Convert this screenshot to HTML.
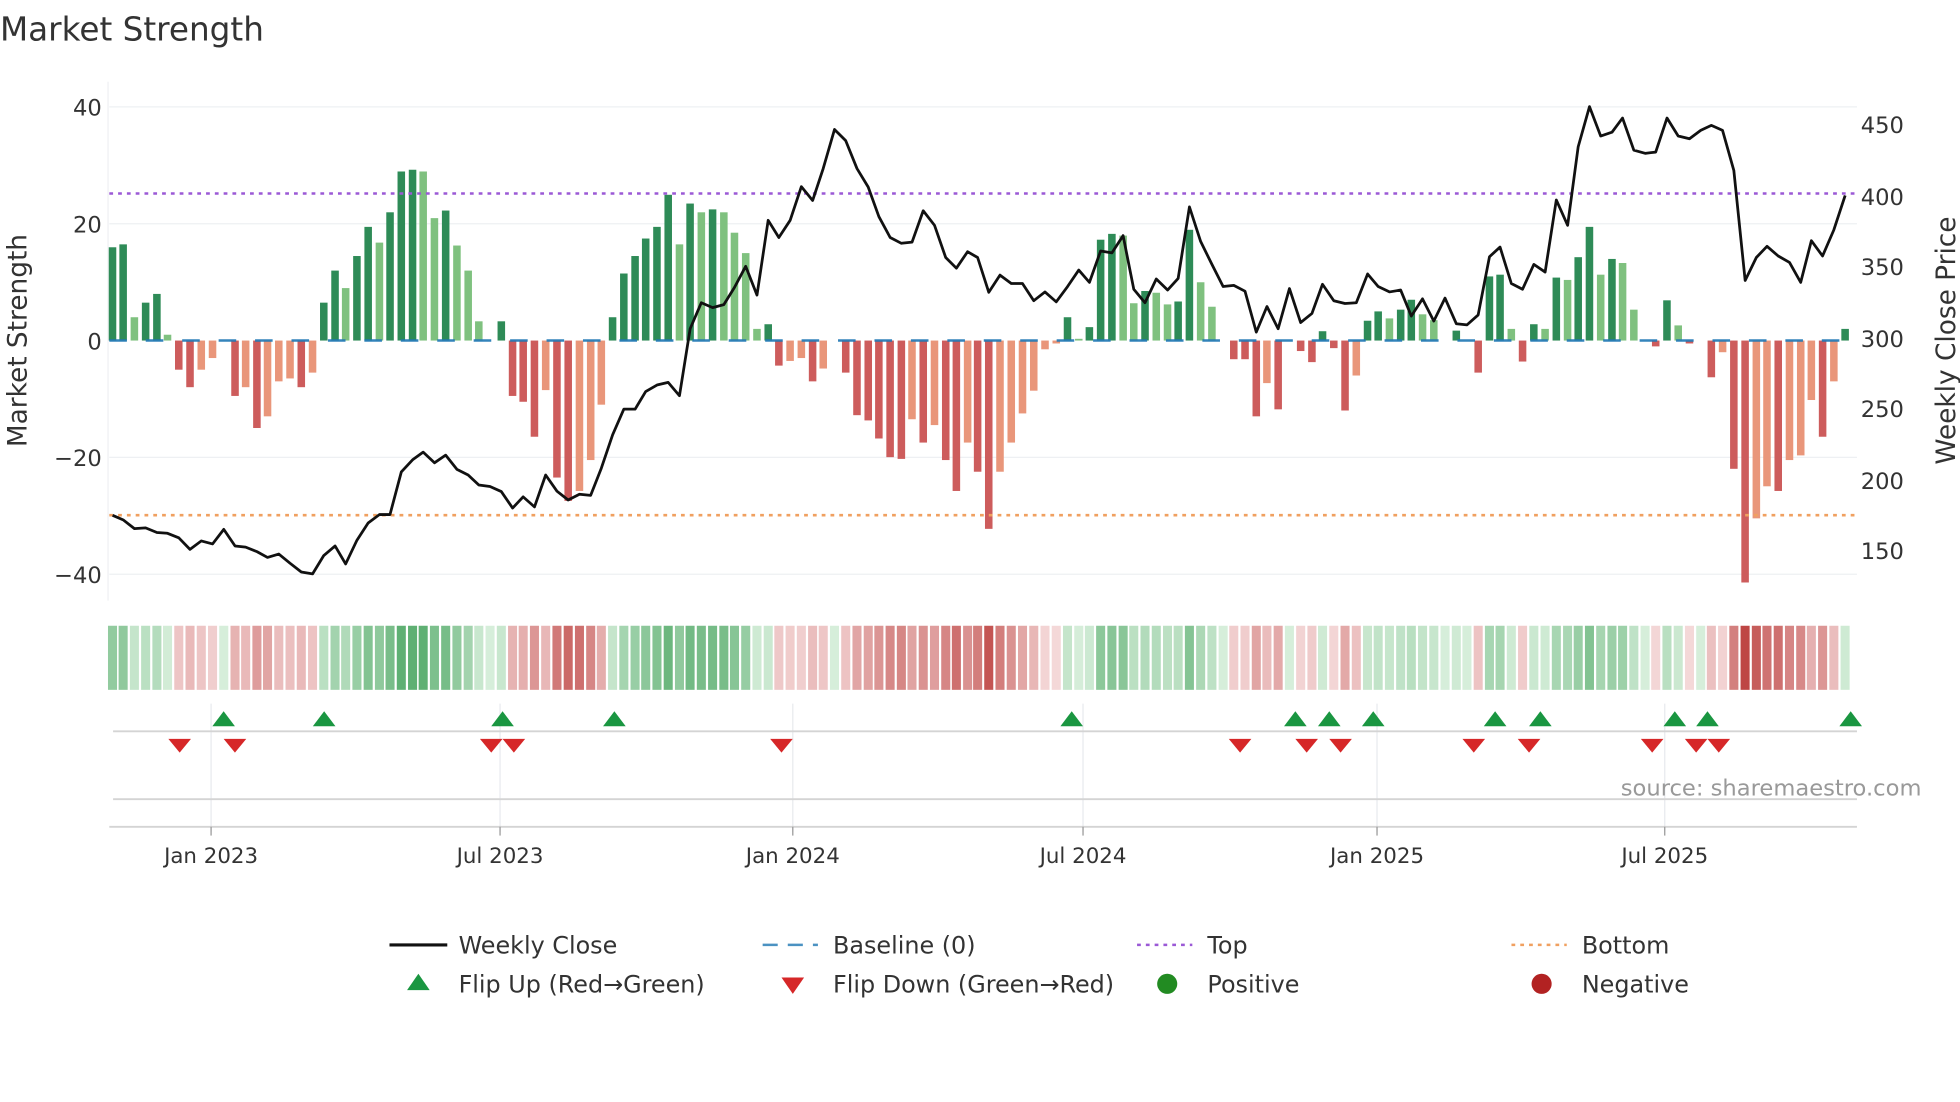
<!DOCTYPE html>
<html><head><meta charset="utf-8"><style>
html,body{margin:0;padding:0;background:#fff;width:1960px;height:1102px;overflow:hidden}
svg{display:block}
text{font-family:"DejaVu Sans","Liberation Sans",sans-serif;fill:#333}
.c{font-family:"DejaVu Sans Condensed","DejaVu Sans",sans-serif}
</style></head><body>
<svg id="s" width="1960" height="1102" viewBox="0 0 1560 877" xmlns="http://www.w3.org/2000/svg">
<text x="0" y="32" font-size="26" fill="#333">Market Strength</text>
<g stroke="#eef0f3" stroke-width="1">
<line x1="87" x2="1478" y1="85" y2="85"/><line x1="87" x2="1478" y1="178" y2="178"/>
<line x1="87" x2="1478" y1="364" y2="364"/><line x1="87" x2="1478" y1="457" y2="457"/>
<line x1="86" x2="86" y1="65" y2="478"/>
</g>
<g font-size="18" class="c" text-anchor="end">
<text x="81" y="92">40</text><text x="81" y="185">20</text><text x="81" y="278">0</text>
<text x="81" y="371">−20</text><text x="81" y="464">−40</text>
</g>
<g font-size="18" class="c">
<text x="1481" y="106">450</text><text x="1481" y="163">400</text><text x="1481" y="219">350</text>
<text x="1481" y="276">300</text><text x="1481" y="332">250</text><text x="1481" y="389">200</text><text x="1481" y="445">150</text>
</g>
<text transform="translate(21,271) rotate(-90)" text-anchor="middle" font-size="21" fill="#333">Market Strength</text>
<text transform="translate(1556,271) rotate(-90)" text-anchor="middle" font-size="21" fill="#333">Weekly Close Price</text>
<g id="bars"></g>
<line x1="87" x2="1478" y1="271" y2="271" stroke="#1f77b4" stroke-width="2" stroke-dasharray="14 15" opacity="0.9"/>
<line x1="87" x2="1478" y1="154" y2="154" stroke="#9b59d6" stroke-width="2" stroke-dasharray="3 4"/>
<line x1="87" x2="1478" y1="410" y2="410" stroke="#f0a060" stroke-width="2" stroke-dasharray="3 4"/>
<polyline id="price" fill="none" stroke="#111" stroke-width="2.2" stroke-linejoin="round"/>
<g id="heat"></g>
<g stroke="#e8eaee" stroke-width="1">
<line x1="168" x2="168" y1="560" y2="662"/><line x1="398" x2="398" y1="560" y2="662"/>
<line x1="631" x2="631" y1="560" y2="662"/><line x1="862" x2="862" y1="560" y2="662"/>
<line x1="1096" x2="1096" y1="560" y2="662"/><line x1="1325" x2="1325" y1="560" y2="662"/>
</g>
<line x1="90" x2="1478" y1="582" y2="582" stroke="#d4d4d4" stroke-width="1.5"/>
<line x1="90" x2="1478" y1="636" y2="636" stroke="#d4d4d4" stroke-width="1.5"/>
<line x1="87" x2="1478" y1="658" y2="658" stroke="#d4d4d4" stroke-width="1.5"/>
<g stroke="#999" stroke-width="1">
<line x1="168" x2="168" y1="658" y2="665"/><line x1="398" x2="398" y1="658" y2="665"/>
<line x1="631" x2="631" y1="658" y2="665"/><line x1="862" x2="862" y1="658" y2="665"/>
<line x1="1096" x2="1096" y1="658" y2="665"/><line x1="1325" x2="1325" y1="658" y2="665"/>
</g>
<g id="marks"></g>
<text x="1290" y="633" font-size="18" fill="#999" style="fill:#999">source: sharemaestro.com</text>
<g font-size="17" class="c" text-anchor="middle">
<text x="168" y="687">Jan 2023</text><text x="398" y="687">Jul 2023</text><text x="631" y="687">Jan 2024</text>
<text x="862" y="687">Jul 2024</text><text x="1096" y="687">Jan 2025</text><text x="1325" y="687">Jul 2025</text>
</g>
<g font-size="19">
<line x1="310" x2="356" y1="752" y2="752" stroke="#111" stroke-width="2.5"/>
<text x="365" y="759">Weekly Close</text>
<line x1="607" x2="651" y1="752" y2="752" stroke="#1f77b4" stroke-width="2" stroke-dasharray="12 8" opacity="0.8"/>
<text x="663" y="759">Baseline (0)</text>
<line x1="905" x2="949" y1="752" y2="752" stroke="#9b59d6" stroke-width="2" stroke-dasharray="3 4"/>
<text x="961" y="759">Top</text>
<line x1="1203" x2="1247" y1="752" y2="752" stroke="#f0a060" stroke-width="2" stroke-dasharray="3 4"/>
<text x="1259" y="759">Bottom</text>
<polygon points="324,788 342,788 333,775" fill="#1a9641"/>
<text x="365" y="790">Flip Up (Red→Green)</text>
<polygon points="622,778 640,778 631,791" fill="#d62728"/>
<text x="663" y="790">Flip Down (Green→Red)</text>
<circle cx="929" cy="783" r="8" fill="#228b22"/>
<text x="961" y="790">Positive</text>
<circle cx="1227" cy="783" r="8" fill="#b22222"/>
<text x="1259" y="790">Negative</text>
</g>
</svg>
<script>
var NS="http://www.w3.org/2000/svg";
function el(t,a,p){var e=document.createElementNS(NS,t);for(var k in a)e.setAttribute(k,a[k]);p.appendChild(e);return e;}
var b1=[[180,16,'d'],[197,16.5,'d'],[215,4,'l'],[233,6.5,'d'],[251,8,'d'],[268,1,'l'],[286,-5,'d'],[304,-8,'d'],[322,-5,'l'],[340,-3,'l'],[358,0,'l'],[376,-9.5,'d'],[393,-8,'l'],[411,-15,'d'],[428,-13,'l'],[446,-7,'l'],[464,-6.5,'l'],[482,-8,'d'],[500,-5.5,'l'],[518,6.5,'d'],[536,12,'d'],[553,9,'l'],[571,14.5,'d'],[589,19.5,'d'],[607,16.8,'l'],[624,22,'d'],[642,29,'d'],[660,29.3,'d'],[677,29,'l'],[695,21,'l'],[713,22.3,'d'],[731,16.3,'l'],[749,12,'l'],[766,3.3,'l'],[784,0,'l'],[802,3.3,'d'],[820,-9.5,'d'],[837,-10.5,'d'],[855,-16.5,'d'],[873,-8.5,'l'],[891,-23.5,'d'],[909,-27.5,'d'],[927,-25.8,'l'],[945,-20.5,'l'],[962,-11,'l'],[980,4,'d'],[998,11.5,'d'],[1016,14.5,'d'],[1033,17.5,'d'],[1051,19.5,'d'],[1069,25,'d'],[1087,16.5,'l'],[1104,23.5,'d'],[1122,22,'l'],[1140,22.5,'d'],[1158,22,'l'],[1175,18.5,'l'],[1193,15,'l'],[1211,2,'l'],[1229,2.8,'d'],[1246,-4.3,'d'],[1264,-3.5,'l'],[1282,-3,'l'],[1300,-7,'d'],[1317,-4.8,'l'],[1335,0,'l'],[1353,-5.5,'d'],[1371,-12.8,'d'],[1389,-13.7,'d'],[1406,-16.8,'d'],[1424,-20,'d'],[1442,-20.3,'d'],[1459,-13.5,'l'],[1477,-17.5,'d'],[1495,-14.5,'l'],[1513,-20.5,'d'],[1530,-25.8,'d'],[1548,-17.5,'l'],[1564,-22.5,'d']];
var b2=[[14,-32.3,'d'],[32,-22.5,'l'],[50,-17.5,'l'],[68,-12.5,'l'],[86,-8.6,'l'],[104,-1.5,'l'],[122,-0.5,'l'],[140,4,'d'],[158,0.3,'l'],[175,2.3,'d'],[193,17.3,'d'],[211,18.3,'d'],[229,18,'l'],[246,6.4,'l'],[264,8.5,'d'],[282,8.2,'l'],[300,6.2,'l'],[317,6.7,'d'],[335,19,'d'],[353,10,'l'],[371,5.8,'l'],[389,0,'l'],[406,-3.2,'d'],[424,-3.2,'d'],[442,-13,'d'],[459,-7.3,'l'],[477,-11.8,'d'],[495,0,'l'],[513,-1.8,'d'],[531,-3.7,'d'],[548,1.6,'d'],[566,-1.3,'d'],[584,-12,'d'],[602,-6,'l'],[620,3.4,'d'],[637,5,'d'],[655,3.8,'l'],[673,5.3,'d'],[690,7,'d'],[708,4.5,'l'],[726,3.5,'l'],[744,0,'l'],[762,1.7,'d'],[779,0,'l'],[797,-5.5,'d'],[815,11,'d'],[832,11.3,'d'],[850,2,'l'],[868,-3.6,'d'],[886,2.8,'d'],[904,2,'l'],[922,10.8,'d'],[940,10.4,'l'],[957,14.3,'d'],[975,19.5,'d'],[993,11.3,'l'],[1011,14,'d'],[1028,13.3,'l'],[1046,5.3,'l'],[1064,0,'l'],[1081,-1,'d'],[1099,6.9,'d'],[1117,2.6,'l'],[1135,-0.5,'d'],[1153,0,'l'],[1170,-6.3,'d'],[1188,-2,'l'],[1206,-22,'d'],[1224,-41.5,'d'],[1242,-30.5,'l'],[1259,-25,'l'],[1277,-25.8,'d'],[1295,-20.5,'l'],[1313,-19.7,'l'],[1330,-10.2,'l'],[1348,-16.5,'d'],[1366,-7,'l'],[1384,2,'d']];
var bars=[];b1.forEach(function(b){bars.push([b[0]/2.01,b[1],b[2]]);});
b2.forEach(function(b){bars.push([780+b[0]/2.01,b[1],b[2]]);});
var g=document.getElementById('bars'),h=document.getElementById('heat');
function mix(a,b,t){var r=[];for(var i=0;i<3;i++)r.push(Math.round(a[i]+(b[i]-a[i])*t));return 'rgb('+r+')';}
bars.forEach(function(b){
 var x=b[0],v=b[1],y0=271,y1=271-v*4.64;
 var col=v>=0?(b[2]=='d'?'#2e8b57':'#7fc17f'):(b[2]=='d'?'#cd5c5c':'#e9967a');
 if(Math.abs(v)>0.05)el('rect',{x:x-3,y:Math.min(y0,y1),width:6,height:Math.abs(y1-y0),fill:col},g);
 var c=v>=0?mix([214,238,218],[95,176,115],Math.min(v/28,1)):mix([245,218,218],[190,70,68],Math.min(-v/36,1));
 el('rect',{x:x-3.6,y:498,width:7.2,height:51,fill:c},h);
});
var p1=[[180,1345],[197,1357],[215,1380],[233,1378],[251,1390],[268,1392],[286,1404],[304,1434],[322,1412],[340,1420],[358,1382],[376,1425],[393,1428],[411,1440],[428,1455],[446,1446],[464,1470],[482,1493],[500,1498],[518,1450],[536,1425],[553,1472],[571,1410],[589,1365],[607,1343],[624,1343],[642,1232],[660,1200],[677,1180],[695,1208],[713,1188],[731,1225],[749,1240],[766,1266],[784,1270],[802,1283],[820,1326],[837,1297],[855,1323],[873,1240],[891,1282],[909,1305],[927,1290],[945,1293],[962,1222],[980,1135],[998,1068],[1016,1068],[1033,1022],[1051,1005],[1069,998],[1087,1033],[1104,858],[1122,790],[1140,803],[1158,795],[1175,750],[1193,695],[1211,770],[1229,575],[1246,620],[1264,575],[1282,487],[1300,523],[1317,440],[1335,338],[1353,367],[1371,440],[1389,488],[1406,565],[1424,620],[1442,635],[1459,632],[1477,550],[1495,588],[1513,672],[1530,700],[1548,657],[1564,672]];
var p2=[[14,763],[32,718],[50,740],[68,740],[86,785],[104,762],[122,788],[140,748],[158,705],[175,737],[193,655],[211,660],[229,615],[246,755],[264,790],[282,728],[300,757],[317,727],[335,540],[353,630],[371,690],[389,748],[406,745],[424,760],[442,867],[459,800],[477,858],[495,753],[513,842],[531,818],[548,742],[566,785],[584,792],[602,790],[620,715],[637,748],[655,762],[673,757],[690,825],[708,780],[726,838],[744,778],[762,845],[779,848],[797,822],[815,670],[832,645],[850,740],[868,755],[886,690],[904,710],[922,522],[940,588],[957,383],[975,278],[993,355],[1011,345],[1028,308],[1046,392],[1064,400],[1081,397],[1099,308],[1117,355],[1135,362],[1153,340],[1170,327],[1188,340],[1206,445],[1224,732],[1242,672],[1259,643],[1277,668],[1295,685],[1313,737],[1330,628],[1348,668],[1366,600],[1384,510]];
var pts=[];p1.forEach(function(p){pts.push((p[0]/2.01).toFixed(1)+','+(p[1]/3.28).toFixed(1));});
p2.forEach(function(p){pts.push((780+p[0]/2.01).toFixed(1)+','+(p[1]/3.28).toFixed(1));});
document.getElementById('price').setAttribute('points',pts.join(' '));
var m=document.getElementById('marks');
[178,258,400,489,853,1031,1058,1093,1190,1226,1333,1359,1473].forEach(function(x){el('polygon',{points:(x-9)+',578 '+(x+9)+',578 '+x+',566',fill:'#1a9641'},m);});
[143,187,391,409,622,987,1040,1067,1173,1217,1315,1350,1368].forEach(function(x){el('polygon',{points:(x-9)+',588 '+(x+9)+',588 '+x+',599',fill:'#d62728'},m);});
</script>
</body></html>
